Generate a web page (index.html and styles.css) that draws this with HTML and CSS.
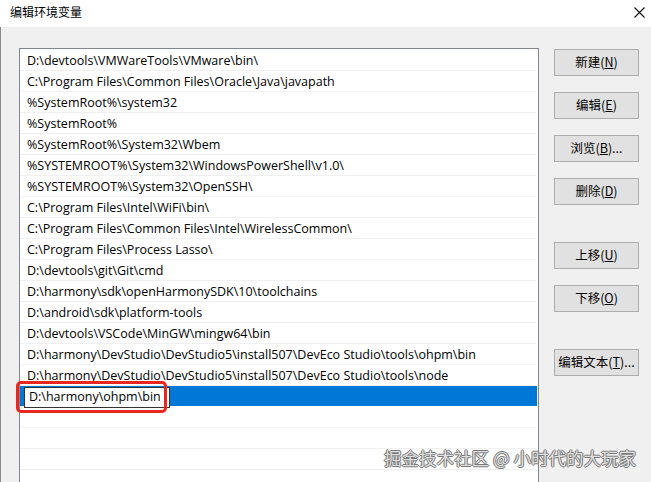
FILE: index.html
```html
<!DOCTYPE html>
<html lang="zh-CN">
<head>
<meta charset="utf-8">
<title>编辑环境变量</title>
<link rel="stylesheet" href="styles.css">
</head>
<body>
<div class="window">
  <div class="titlebar">
    <span class="title">编辑环境变量</span>
    <svg class="close" width="11" height="11" viewBox="0 0 11 11"><path d="M0.5 0.5 L10.5 10.5 M10.5 0.5 L0.5 10.5" stroke="#111" stroke-width="1.1" fill="none"/></svg>
  </div>
  <div class="content">
    <div class="list">
      <div class="row">D:\devtools\VMWareTools\VMware\bin\</div>
      <div class="row">C:\Program Files\Common Files\Oracle\Java\javapath</div>
      <div class="row">%SystemRoot%\system32</div>
      <div class="row">%SystemRoot%</div>
      <div class="row">%SystemRoot%\System32\Wbem</div>
      <div class="row">%SYSTEMROOT%\System32\WindowsPowerShell\v1.0\</div>
      <div class="row">%SYSTEMROOT%\System32\OpenSSH\</div>
      <div class="row">C:\Program Files\Intel\WiFi\bin\</div>
      <div class="row">C:\Program Files\Common Files\Intel\WirelessCommon\</div>
      <div class="row">C:\Program Files\Process Lasso\</div>
      <div class="row">D:\devtools\git\Git\cmd</div>
      <div class="row">D:\harmony\sdk\openHarmonySDK\10\toolchains</div>
      <div class="row">D:\android\sdk\platform-tools</div>
      <div class="row">D:\devtools\VSCode\MinGW\mingw64\bin</div>
      <div class="row">D:\harmony\DevStudio\DevStudio5\install507\DevEco Studio\tools\ohpm\bin</div>
      <div class="row">D:\harmony\DevStudio\DevStudio5\install507\DevEco Studio\tools\node</div>
      <div class="row selected"><span class="edit">D:\harmony\ohpm\bin</span></div>
      <div class="row"></div>
      <div class="row"></div>
      <div class="row"></div>
      <div class="row"></div>
    </div>
    <div class="buttons">
      <div class="btn">新建(<u>N</u>)</div>
      <div class="btn">编辑(<u>E</u>)</div>
      <div class="btn">浏览(<u>B</u>)...</div>
      <div class="btn">删除(<u>D</u>)</div>
      <div class="btn group">上移(<u>U</u>)</div>
      <div class="btn">下移(<u>O</u>)</div>
      <div class="btn group">编辑文本(<u>T</u>)...</div>
    </div>
  </div>
  <div class="annotation"></div>
  <div class="watermark">掘金技术社区 @ 小时代的大玩家</div>
</div>
</body>
</html>
```
FILE: styles.css
```css
* { box-sizing: border-box; }
html, body { margin: 0; padding: 0; }
body {
  width: 651px;
  height: 482px;
  overflow: hidden;
  background: #f0f0f0;
  font-family: "Open Sans", "Noto Sans CJK SC", sans-serif;
  font-size: 12.5px;
  color: #000;
}
.window {
  position: relative;
  width: 651px;
  height: 482px;
  overflow: hidden;
}
.titlebar {
  height: 27px;
  background: #fff;
  display: flex;
  justify-content: space-between;
  align-items: flex-start;
  padding: 4px 6px 0 10px;
}
.title {
  font-family: "Noto Sans CJK SC", sans-serif;
  font-size: 12px;
  line-height: 16px;
  color: #000;
}
.close { margin-top: 3px; }
.content {
  display: flex;
  align-items: flex-start;
  height: 455px;
  padding: 21px 0 0 18px;
  border-left: 1px solid #8c8c8c;
}
.list {
  width: 520px;
  height: 600px;
  flex: none;
  background: #fff;
  border: 1px solid #828790;
  padding-top: 1px;
}
.row {
  height: 21px;
  line-height: 18px;
  padding-top: 2px;
  margin-right: 2px;
  padding-left: 7px;
  border-bottom: 1px solid #f0f0f0;
  white-space: nowrap;
}
.row.selected {
  background: #0078d7;
  margin-right: 1px;
  padding-top: 0;
  padding-left: 4px;
  border-bottom-color: #fff;
  display: flex;
  align-items: flex-start;
}
.edit {
  display: block;
  width: 146px;
  height: 21px;
  margin-top: 1px;
  background: #fff;
  border: 1px solid #333;
  padding-left: 4px;
  line-height: 18px;
}
.buttons {
  display: flex;
  flex-direction: column;
  gap: 16px;
  margin: 1px 0 0 15px;
  width: 85px;
}
.btn {
  height: 27px;
  border: 1px solid #adadad;
  background: #e1e1e1;
  font-family: "Noto Sans CJK SC", sans-serif;
  font-size: 12.5px;
  line-height: 24px;
  text-align: center;
  white-space: nowrap;
}
.btn u { text-underline-offset: 1px; }
.btn.group { margin-top: 21px; }
.annotation {
  position: absolute;
  left: 16px;
  top: 381px;
  width: 151px;
  height: 32px;
  border: 3px solid #e8281e;
  border-radius: 5px;
}
.watermark {
  position: absolute;
  left: 384px;
  top: 446px;
  font-family: "Noto Sans CJK SC", sans-serif;
  font-size: 17.5px;
  line-height: 24px;
  color: #e0e0e0;
  white-space: nowrap;
  text-shadow: 1px 0 0 #777, -1px 0 0 #777, 0 1px 0 #777, 0 -1px 0 #777;
}
```
